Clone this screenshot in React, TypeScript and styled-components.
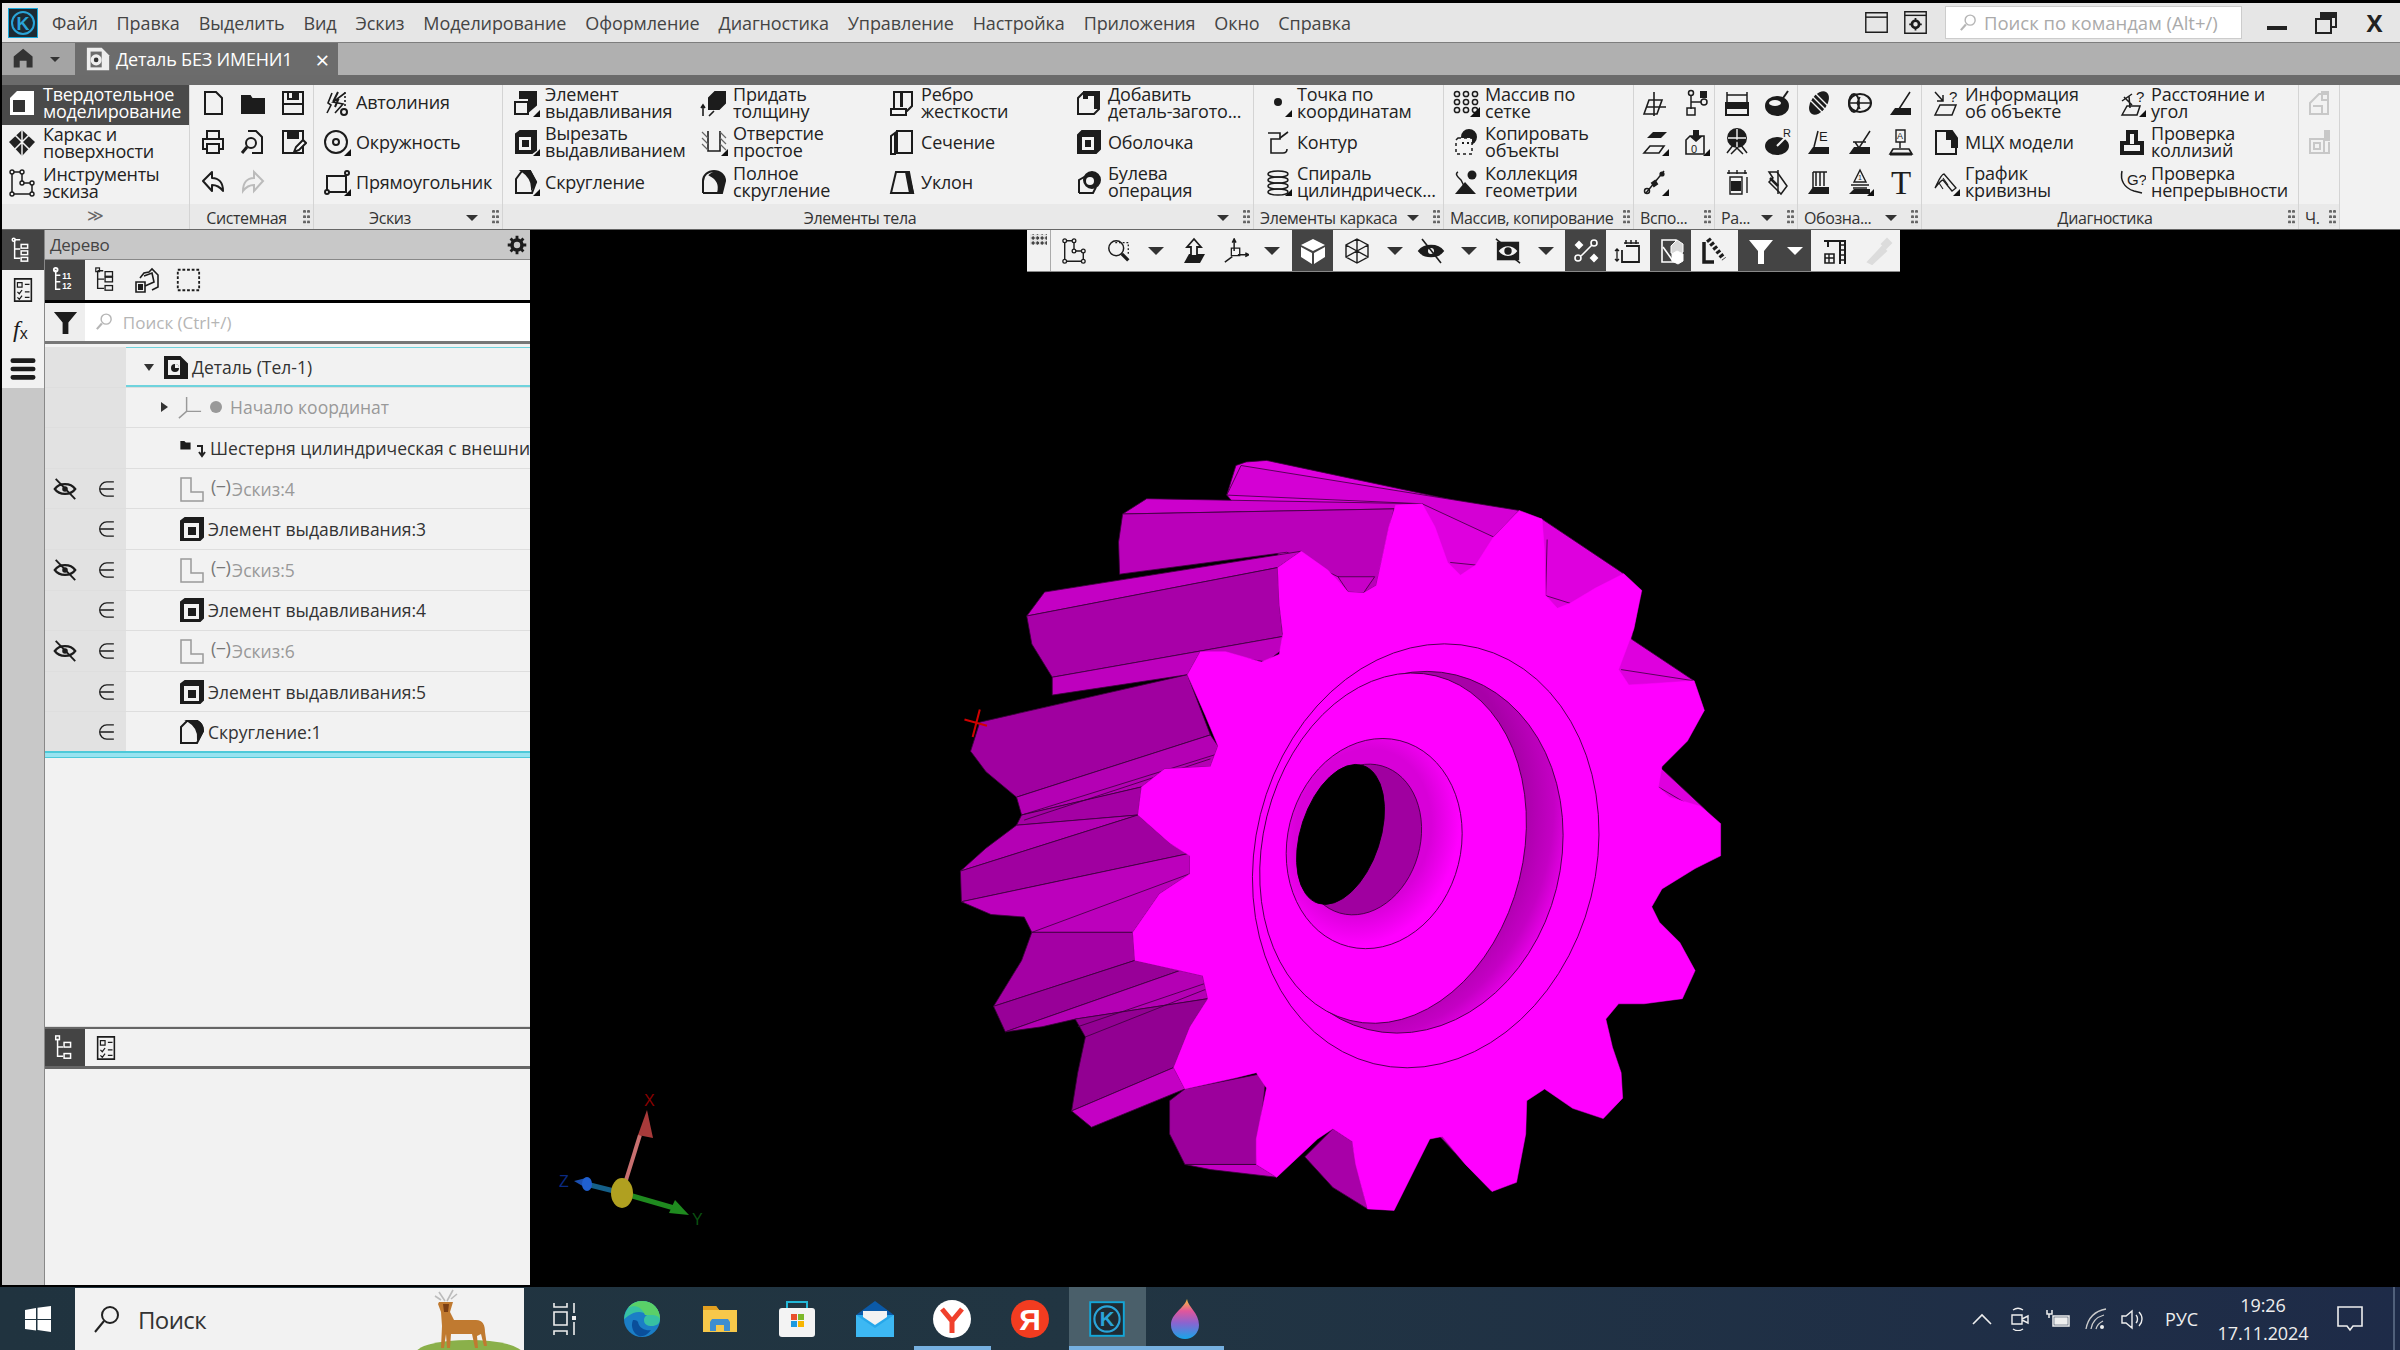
import React, { ReactNode } from "react";
import styled, { createGlobalStyle } from "styled-components";

const GlobalStyle = createGlobalStyle`
  html, body { margin: 0; padding: 0; background: #000; }
  * { box-sizing: border-box; }
  #root { width: 2400px; height: 1350px; overflow: hidden; }
`;

const FONT = `"Open Sans", "Noto Sans", sans-serif`;

const C = "#1c1c1c";
const more = <path d="M28 21v7h-7z" fill="#111" stroke="none" />;

const icons: Record<string, ReactNode> = {
  // системная
  newdoc: <path d="M6 3h11l6 6v16H6z" />,
  open: <path d="M3 7h8l2 3h12v14H3z" fill={C} />,
  save: <><path d="M4 3h20v22H4z" /><path d="M9 3h10v7H9zM4 15h20" /><path d="M14 4h3v5h-3z" fill={C} /></>,
  print: <><path d="M8 11V3h12v8M8 21H4V11h20v10h-4" /><path d="M8 16h12v9H8z" /></>,
  preview: <><path d="M9 3h8l6 6v16H13" /><circle cx="12" cy="15" r="5" /><path d="M8 19l-5 6" strokeWidth="3" /></>,
  saveas: <><path d="M4 3h20v22H4z" /><path d="M9 3h10v7H9z" fill={C} /><path d="M15 24l2-5 7-7 3 3-7 7z" fill="#fff" /></>,
  undo: <path d="M13 4L4 13l9 10v-6c5 0 8 2 11 6 0-8-4-13-11-13z" strokeLinejoin="round" />,
  redo: <path d="M15 4l9 9-9 10v-6c-5 0-8 2-11 6 0-8 4-13 11-13z" stroke="#bbb" />,
  // эскиз
  autoline: <><path d="M4 24l4-8-3-2 4-10M22 4l-12 9 10 2-8 9" strokeWidth="1.6" /><circle cx="21" cy="23" r="3" /><path d="M15 3l-4 8h4l-3 7" strokeWidth="2" /><path d="M22 3v16" strokeWidth="1.6" strokeDasharray="2 2" /></>,
  circle: <><circle cx="13" cy="14" r="11" /><circle cx="13" cy="14" r="3" />{more}</>,
  rect: <><path d="M4 8h19v16H4z" /><circle cx="24" cy="5" r="2" fill="#fff" /><circle cx="4" cy="24" r="2" fill="#fff" />{more}</>,
  // элементы тела
  extrude: <><path d="M3 13h13v12H3z" /><path d="M8 3h16v13l-7 6V9H8z" fill={C} />{more}</>,
  cut: <><path d="M4 6l4-3h16v19l-4 3H4z" fill={C} /><path d="M7 9h12v13H7z" fill="#f4f4f4" stroke="none" /><path d="M10 12h7v7h-7z" fill={C} stroke="none" />{more}</>,
  fillet: <><path d="M4 25V11l6-8h8l6 11-4 11z" /><path d="M10 3h8l6 11-4 6c0-8-4-13-10-17z" fill={C} />{more}</>,
  thick: <><path d="M9 9l6-6h10v11l-6 6H9z" fill={C} /><path d="M3 27v-10M1 19l2-3 2 3M9 27l5-5" strokeWidth="1.6" /></>,
  hole: <><path d="M8 3v20h12V3" strokeWidth="1.6" /><path d="M2 4l6 6M2 10l6 6M2 16l6 6M20 4l6 6M20 10l6 6M20 16l6 6" strokeWidth="1.2" stroke="#666" />{more}</>,
  fullfillet: <><path d="M3 25V13C3 7 8 3 14 3c6 0 11 4 11 10" /><path d="M10 7c4-4 12-4 15 6l-3 12h-4c2-7 0-14-8-18z" fill={C} /><path d="M3 25h15" /></>,
  rib: <><path d="M6 3h18v14l-5 5H6z" /><path d="M12 4h3v14h-3z" fill={C} stroke="none" /><path d="M3 20h15v6H3z" fill="#f4f4f4" /></>,
  section: <><path d="M3 8l4-3v21H3zM9 3h15v22H9z" /></>,
  draft: <><path d="M3 25L8 4h12l5 21z" /><path d="M18 4h3l4 21h-3z" fill={C} /></>,
  addpart: <><path d="M3 9l5-5h16v16l-5 5H3z" /><path d="M9 3h15v16h-4V9H9z" fill={C} /><path d="M13 7h6v6h-6z" fill="#f4f4f4" stroke="none" /></>,
  shell: <><path d="M3 7l4-4h18v18l-4 4H3z" fill={C} /><path d="M7 9h12v13H7z" fill="#f4f4f4" stroke="none" /><path d="M10 12h6v7h-6z" fill={C} stroke="none" /></>,
  bool: <><path d="M4 25V12l7-4M4 25h14l3-6" /><circle cx="17" cy="12" r="8" fill={C} /><circle cx="15" cy="13" r="4" fill="#f4f4f4" stroke="none" /></>,
  // каркас
  point: <><circle cx="14" cy="13" r="4" fill={C} stroke="none" />{more}</>,
  contour: <><path d="M4 5h12v6H7v14h12" strokeWidth="1.6" /><path d="M16 10l8-6M19 25c2 0 4-1 4-4" strokeWidth="1.6" /></>,
  spiral: <><ellipse cx="14" cy="6" rx="10" ry="3" strokeWidth="1.5" /><ellipse cx="14" cy="12" rx="10" ry="3" strokeWidth="1.5" /><ellipse cx="14" cy="18" rx="10" ry="3" strokeWidth="1.5" /><ellipse cx="14" cy="24" rx="10" ry="3" strokeWidth="1.5" />{more}</>,
  // массив
  grid: <><g strokeWidth="1.5">{[5, 13, 21].map((y) => [5, 14, 23].map((x) => (<circle key={`${x}-${y}`} cx={x} cy={y} r="2.6" />)))}</g><path d="M28 18v10h-10z" fill="#111" stroke="none" /></>,
  copy: <><circle cx="17" cy="9" r="7" fill={C} /><path d="M6 10h14v16H4V12z" strokeDasharray="3 3" strokeWidth="1.5" fill="#f4f4f4" /><path d="M10 15h2M15 15h2" /></>,
  collection: <><path d="M6 4c-4 2 1 6 3 8l3 6" strokeWidth="1.5" /><circle cx="20" cy="7" r="4.5" fill={C} stroke="none" /><path d="M3 26l10-12 11 12z" fill={C} stroke="none" /></>,
  // вспомогательные
  a1: <><path d="M3 25l5-14h13l-5 14z" strokeWidth="1.6" /><path d="M13 3v24M5 18h20" strokeWidth="1.6" /></>,
  a2: <><circle cx="9" cy="4" r="2.5" strokeWidth="1.5" /><path d="M9 7v13M9 13h10" strokeWidth="1.5" /><circle cx="22" cy="13" r="3" strokeWidth="1.5" /><path d="M18 2h7v7h-7z" fill={C} stroke="none" /><path d="M5 19h8v7H5z" strokeWidth="1.5" /></>,
  a3: <><path d="M6 10l6-6h14l-6 6z" fill={C} stroke="none" /><path d="M3 25l6-7h14l-5 7z" strokeWidth="1.6" />{more}</>,
  a4: <><path d="M8 8h14v18H4V12z" strokeWidth="1.6" /><path d="M11 2h6v6h4l-7 6-7-6h4z" fill={C} stroke="none" /><text x="9" y="25" fontSize="11" fill={C} stroke="none" fontFamily="Liberation Sans">0</text>{more}</>,
  a5: <><path d="M5 25L23 3" strokeWidth="1.5" /><circle cx="6" cy="23" r="2.5" strokeWidth="1.5" /><path d="M11 15l3-2 2 3-3 2z" fill={C} /><circle cx="21" cy="6" r="1.6" fill={C} />{more}</>,
  // размеры
  r1: <><path d="M4 3v10M24 3v10M4 6h20" strokeWidth="1.5" /><path d="M3 14h22v12H3z" /><path d="M3 14h22v5H3z" fill={C} /></>,
  r2: <><ellipse cx="13" cy="17" rx="11" ry="9" fill={C} /><ellipse cx="11" cy="14" rx="6" ry="3" fill="#f4f4f4" stroke="none" /><path d="M17 12l7-10" strokeWidth="2" /></>,
  r3: <><circle cx="14" cy="10" r="9" fill={C} /><path d="M14 1v18M5 10h18" stroke="#f4f4f4" strokeWidth="1.4" /><path d="M14 12L4 25M14 12l10 13M8 26l6-6 6 6" strokeWidth="1.5" /></>,
  r4: <><ellipse cx="13" cy="18" rx="11" ry="8" fill={C} /><path d="M13 18l8-8" stroke="#f4f4f4" /><text x="19" y="9" fontSize="11" fill={C} stroke="none" fontFamily="Liberation Sans">R</text></>,
  r5: <><path d="M6 2v4M14 2v4M22 2v4M4 5h20M7 9h12v17H7z" strokeWidth="1.4" /><path d="M9 14h8v8H9z" fill={C} /><path d="M24 9v16" strokeWidth="1.4" /></>,
  r6: <><path d="M5 4l8 0 10 14-6 8-12-12 4-4z" strokeWidth="1.5" /><path d="M14 2v24" strokeWidth="1.5" /><path d="M6 10l8 8" strokeWidth="2.5" /></>,
  // обозначения
  o1: <><ellipse cx="14" cy="14" rx="7" ry="12" transform="rotate(35 14 14)" fill={C} /><path d="M8 8l12 12M6 12l12 12M11 5l12 12" stroke="#f4f4f4" strokeWidth="1.4" /></>,
  o2: <><ellipse cx="14" cy="14" rx="11" ry="9" /><ellipse cx="8" cy="14" rx="5" ry="9" /><path d="M2 14h24M14 8l-3 6 3 6" strokeWidth="1.4" /></>,
  o3: <><path d="M12 20L23 3M8 20h16" strokeWidth="1.5" /><path d="M3 26l5-7h16v7z" fill={C} stroke="none" /></>,
  o4: <><path d="M9 19L13 3" strokeWidth="1.5" /><text x="14" y="13" fontSize="13" fill={C} stroke="none" fontFamily="Liberation Sans">E</text><path d="M3 26l5-7h16v7z" fill={C} stroke="none" /></>,
  o5: <><path d="M9 14l4 6 11-17M7 14h13" strokeWidth="1.5" /><path d="M3 26l5-7h16v7z" fill={C} stroke="none" /></>,
  o6: <><path d="M13 14v6" strokeWidth="1.5" /><path d="M9 2h9v12H9z" strokeWidth="1.4" /><text x="10" y="11" fontSize="9" fill={C} stroke="none" fontFamily="Liberation Sans">A</text><path d="M3 26l3-5h16l3 5z" strokeWidth="1.6" /><path d="M3 26h22" strokeWidth="3" /></>,
  o7: <><path d="M8 4h14M11 4v14M15 4v14M19 4v14M8 4v16" strokeWidth="1.5" /><path d="M3 26l5-7h16v7z" fill={C} stroke="none" /></>,
  o8: <><path d="M14 2l6 12H8z" strokeWidth="1.4" /><text x="12" y="12" fontSize="7" fill={C} stroke="none" fontFamily="Liberation Sans">1</text><path d="M5 17h18M7 20h14" strokeWidth="1.5" /><path d="M3 26l5-5h16v5z" fill={C} stroke="none" />{more}</>,
  t: <text x="14" y="26" fontSize="33" textAnchor="middle" fill={C} stroke="none" fontFamily="Liberation Serif">T</text>,
  // диагностика
  info: <><path d="M3 3l8 9M11 6v6H5" strokeWidth="1.5" /><path d="M3 26l5-10h16l-4 10z" strokeWidth="1.5" /><text x="17" y="13" fontSize="15" fill={C} stroke="none" fontFamily="Liberation Sans">?</text></>,
  mch: <><path d="M4 3h12v8h8v15H4z" /><path d="M15 3h5l5 7v9h-5v-8h-5z" fill={C} /></>,
  curv: <><path d="M3 20c3-6 6-14 9-14l12 14-4 3-9-11c-2 0-5 4-8 8z" strokeWidth="1.3" /><path d="M7 15l4 6M11 10l5 7" strokeWidth="1.1" />{more}</>,
  dist: <><path d="M4 26l5-9h13l-3 9z" strokeWidth="1.5" /><path d="M4 12l10-7M6 8l8 8M11 7l1 12" strokeWidth="1.5" /><text x="18" y="13" fontSize="15" fill={C} stroke="none" fontFamily="Liberation Sans">?</text>{more}</>,
  collide: <><path d="M9 3h10v11h6v12H3V14h6z" fill={C} /><path d="M12 6h4v10h-4zM6 17h16v6H6z" fill="#f4f4f4" stroke="none" /></>,
  cont: <><path d="M4 3c-2 9 2 17 12 20l8 2" strokeWidth="1.5" /><text x="9" y="17" fontSize="15" fill={C} stroke="none" fontFamily="Liberation Sans">G?</text></>,
  c1: <g stroke="#c8c8c8"><path d="M5 14l9-9h9v20H5zM8 17h9v8M17 3h6v8h-6z" /></g>,
  c2: <g stroke="#c8c8c8"><path d="M5 11h14v14H5zM9 15h6v6H9z" /><path d="M20 3h4v9h-4z" fill="#c8c8c8" /><path d="M24 14v11h-5" /></g>,
  // панель вида
  lsketch: <><path d="M4 3h10v11h10v11H4z" strokeWidth="1.5" /><g fill="#f2f2f2" strokeWidth="1.4"><circle cx="4" cy="3" r="2" /><circle cx="14" cy="3" r="2" /><circle cx="14" cy="14" r="2" /><circle cx="24" cy="14" r="2" /><circle cx="24" cy="25" r="2" /><circle cx="4" cy="25" r="2" /></g></>,
  zoom: <><circle cx="11" cy="11" r="8" strokeWidth="1.6" /><path d="M17 17l7 7" strokeWidth="3.5" /><path d="M10 5h14v12" strokeWidth="1.4" strokeDasharray="2 2" /></>,
  normal: <><path d="M5 26l5-9h16l-5 9z" fill={C} stroke="none" /><path d="M15 2l7 8h-4v9h-6v-9H8z" fill="#f2f2f2" strokeWidth="1.8" /></>,
  axes: <><path d="M12 14v-12M10 5l2-4 2 4M16 18h11M24 16l4 2-4 2M10 20l-8 6" strokeWidth="1.6" /><path d="M9 11h9v8H9z" strokeWidth="1.4" /></>,
  cube: <><path d="M14 2l12 6-12 6L2 8z" fill="#fff" stroke="none" /><path d="M2 10l11 6v11L2 20zM26 10l-11 6v11l11-7z" fill="#fff" stroke="none" /></>,
  wire: <path d="M14 2l11 6v12l-11 6L3 20V8zM3 8l11 6 11-6M14 14v12M3 20l11-6 11 6M14 2v12" strokeWidth="1.4" />,
  eyeoff: <><path d="M2 14c5-7 19-7 24 0-5 7-19 7-24 0z" fill={C} /><circle cx="14" cy="14" r="3" fill="#f2f2f2" stroke="none" /><path d="M5 2l19 24" strokeWidth="1.6" /></>,
  eyebox: <><path d="M2 4h24v20H2z" fill={C} stroke="none" /><path d="M4 14c5-7 15-7 20 0-5 7-15 7-20 0z" fill="#f2f2f2" stroke="none" /><circle cx="14" cy="14" r="4" fill={C} stroke="none" /><path d="M1 1l5 4M22 23l5 4" strokeWidth="1.6" /></>,
  nodes: <g stroke="#fff"><path d="M9 19L20 8" strokeWidth="1.6" /><circle cx="22" cy="6" r="3" strokeWidth="1.6" /><circle cx="6" cy="21" r="3" strokeWidth="1.6" /><path d="M7 5l3 3-3 3-3-3zM22 18l3 3-3 3-3-3z" fill="#fff" /></g>,
  frame: <><path d="M12 3v4M17 3v4M22 3v4M10 6h15" strokeWidth="1.5" /><path d="M12 9h13v16H8V13" strokeWidth="1.8" /><path d="M3 12v12M1 14l2-2 2 2M1 22l2 2 2-2" strokeWidth="1.3" /></>,
  solids: <g stroke="#fff"><path d="M5 3h14v22H5z" strokeWidth="1.6" /><path d="M14 9l6-6 6 4v8l-6 4-6-3z" fill="#d8d8d8" strokeWidth="1" /><path d="M15 17l5-3 6 3v7l-5 3-6-3z" fill="#fff" strokeWidth="1" /><path d="M6 10l10 14" strokeWidth="1.6" /></g>,
  chain: <><path d="M5 5v20h10" strokeWidth="3.5" /><path d="M9 2l16 20" strokeWidth="5" strokeDasharray="3 2" /></>,
  funnel: <path d="M2 3h24L17 14v13h-6V14z" fill="#fff" stroke="none" />,
  crane: <><path d="M3 4h22M19 4v23M24 4v23M7 4v6" strokeWidth="2" /><path d="M19 8h5M19 13h5M19 18h5M19 23h5" strokeWidth="1.4" /><path d="M4 17h9v9H4z" strokeWidth="1.6" /><path d="M4 21h9M8 17v9" strokeWidth="1.4" /></>,
  pipette: <path d="M3 25l14-15 4 4L7 27zM17 7l5-5 4 4-5 5z" fill="#dcdcdc" stroke="#dcdcdc" />,
  // дерево
  partico: <><path d="M3 4h15l7 7v14H3z" fill={C} /><path d="M6 7h12v15H6z" fill="#f2f2f2" stroke="none" /><circle cx="13" cy="15" r="4" fill={C} stroke="none" /><path d="M13 15h4a4 4 0 0 0-4-4z" fill="#f2f2f2" stroke="none" /></>,
  origin: <path d="M11 3v15L3 25M11 18h15" stroke="#999" strokeWidth="1.5" />,
  folder: <path d="M3 5h5l2 2h6v9H3z" fill={C} stroke="none" />,
  sketch: <path d="M3 3h10v14h12v9H3z" stroke="#999" strokeWidth="1.5" />,
  extr: <><path d="M3 6l4-3h18v19l-3 3H3z" fill={C} /><path d="M6 8h15v15H6z" fill="#f2f2f2" stroke="none" /><path d="M10 12h8v8h-8z" fill={C} stroke="none" /></>,
  round: <><path d="M3 9l6-6h10c4 2 6 6 6 10l-6 12H3z" fill="#f2f2f2" /><path d="M10 3h9c4 2 6 6 6 10l-5 9c1-8-3-15-10-19z" fill={C} /></>,
  eyeStruck: <><path d="M3 14c5-7 17-7 22 0-5 7-17 7-22 0z" strokeWidth="2.4" /><circle cx="14" cy="14" r="3" fill={C} stroke="none" /><path d="M4 3l21 22" strokeWidth="2" /></>,
  member: <path d="M24 5h-9a9 9 0 0 0 0 18h9M7 14h17" strokeWidth="1.7" />,
  treeRail: <><path d="M5 3v20h6M5 13h6M5 3h6" strokeWidth="1.6" /><g fill="none" strokeWidth="1.6"><circle cx="4" cy="3" r="1.6" /><rect x="12" y="8" width="7" height="4" /><rect x="12" y="15" width="7" height="4" /><rect x="12" y="22" width="7" height="4" /></g></>,
  treeNum: <><path d="M4 3v21h5M4 9h5M4 16h5" strokeWidth="1.6" /><circle cx="4" cy="3" r="2" /><text x="11" y="13" fontSize="9" fontWeight="700" fill="#fff" stroke="none" fontFamily="Liberation Sans">11</text><text x="11" y="24" fontSize="9" fontWeight="700" fill="#fff" stroke="none" fontFamily="Liberation Sans">12</text></>,
  treeGroup: <><path d="M5 4v19h7M5 13h7M5 4h6" strokeWidth="1.5" /><rect x="3" y="1" width="4" height="4" strokeWidth="1.3" /><rect x="13" y="5" width="8" height="5" strokeWidth="1.4" /><rect x="13" y="11" width="8" height="5" strokeWidth="1.4" /><rect x="13" y="20" width="8" height="5" strokeWidth="1.4" /></>,
  treeFaces: <><path d="M7 12l4-5 5-1 3-3 6 6v12l-6 3" strokeWidth="1.6" /><path d="M3 16h9v10H3z" strokeWidth="1.6" /><path d="M6 19h3v4H6z" fill={C} /><path d="M11 10l8-3 2 9-9 4" strokeWidth="1.6" /></>,
  treeSel: <rect x="3" y="3" width="23" height="22" strokeDasharray="3 2" strokeWidth="2" />,
  checks: <><path d="M5 2h18v24H5z" strokeWidth="1.7" /><path d="M8 6h5v5H8zM16 8h5M8 16l2 2 3-4M16 16h5M8 22l2 2 3-4M16 22h5" strokeWidth="1.3" /></>,
  filter: <path d="M2 3h24L17 14v12h-6V14z" fill={C} stroke="none" />,
  lens: <><circle cx="17" cy="10" r="7" stroke="#b5b5b5" strokeWidth="2" /><path d="M11 16l-7 8" stroke="#b5b5b5" strokeWidth="3" /></>,
  gear: <><circle cx="14" cy="14" r="7" strokeWidth="5" /><path d="M14 1v5M14 22v5M1 14h5M22 14h5M5 5l3 3M20 20l3 3M23 5l-3 3M8 20l-3 3" strokeWidth="4" /></>,
  fx: <text x="4" y="21" fontSize="24" fontStyle="italic" fill={C} stroke="none" fontFamily="Liberation Serif">f<tspan fontSize="16" dy="2" fontFamily="Liberation Sans" fontStyle="normal">x</tspan></text>,
  lines: <path d="M3 5h22M3 14h22M3 23h22" strokeWidth="5" strokeLinecap="round" />,
  home: <path d="M2 24V11L13 2l11 9v13h-7v-8H9v8z" fill="#333" stroke="none" />,
  tabpart: <><path d="M2 2h16l8 8v16H2z" fill="#eee" stroke="none" /><path d="M6 6h12v17H6z" fill="#6c6c6c" stroke="none" /><circle cx="12" cy="15" r="6" fill="#eee" stroke="none" /><circle cx="12" cy="15" r="2.5" fill="#333" stroke="none" /></>,
  wnd: <><path d="M2 3h24v22H2z" strokeWidth="1.6" /><path d="M2 8h24" strokeWidth="1.6" /></>,
  wndgear: <><path d="M2 2h24v24H2z" strokeWidth="1.6" /><path d="M2 6h24" strokeWidth="1.6" /><circle cx="14" cy="16" r="4" strokeWidth="3" /><path d="M14 9v3M14 20v3M7 16h3M18 16h3" strokeWidth="2" /></>,
};

const Svg = styled.svg<{ $size: number }>`
  width: ${(p) => p.$size}px;
  height: ${(p) => p.$size}px;
  flex: none;
`;

function Ico({ name, size = 28, light }: { name: string; size?: number; light?: boolean }) {
  return (
    <Svg $size={size} viewBox="0 0 28 28" fill="none" stroke={light ? "#fff" : C} strokeWidth={2}>
      {icons[name]}
    </Svg>
  );
}

const Page = styled.div`
  width: 2400px;
  height: 1350px;
  padding-top: 3px;
  background: #000;
  display: flex;
  flex-direction: column;
  font-family: ${FONT};
  overflow: hidden;
`;

/* ---------- шапка ---------- */
const MenuBar = styled.div`
  height: 40px;
  margin-left: 2px;
  background: #e6e6e6;
  border-bottom: 1px solid #7d7d7d;
  display: flex;
  align-items: center;
  padding-left: 6px;
`;
const Logo = styled.svg`
  width: 30px;
  height: 30px;
  margin-right: 14px;
`;
const MenuList = styled.div`
  display: flex;
  gap: 18.9px;
  font-size: 18px;
  color: #444;
  letter-spacing: -0.1px;
`;
const MenuRight = styled.div`
  margin-left: auto;
  display: flex;
  align-items: center;
  gap: 14px;
`;
const CommandSearch = styled.div`
  width: 297px;
  height: 33px;
  margin-left: 3px;
  background: #fff;
  border: 1px solid #ccc;
  display: flex;
  align-items: center;
  gap: 6px;
  padding-left: 12px;
  font-size: 18.5px;
  white-space: nowrap;
  color: #aaa;
`;
const WinButtons = styled.div`
  display: flex;
  align-items: center;
  margin-left: -4px;
  margin-right: 1px;
`;
const WinButton = styled.div`
  width: 49px;
  height: 36px;
  display: flex;
  align-items: center;
  justify-content: center;
  color: #222;
  font-size: 24px;
  font-weight: 700;
`;
const Minimize = styled.span`
  width: 20px;
  height: 4px;
  margin-top: 10px;
  background: #222;
`;

const TabBar = styled.div`
  height: 32px;
  margin-left: 2px;
  background: #b0b0b0;
  display: flex;
`;
const HomeCell = styled.div`
  width: 73px;
  background: #a4a4a4;
  display: flex;
  align-items: center;
  padding-left: 10px;
  gap: 14px;
`;
const TabCaret = styled.span`
  width: 0;
  height: 0;
  border-left: 5px solid transparent;
  border-right: 5px solid transparent;
  border-top: 5px solid #333;
`;
const DocTab = styled.div`
  width: 263px;
  background: #6c6c6c;
  color: #fff;
  display: flex;
  align-items: center;
  font-size: 18px;
  letter-spacing: -0.2px;
  padding-left: 10px;
  gap: 5px;
`;
const TabClose = styled.span`
  margin-left: auto;
  margin-right: 9px;
  font-size: 24px;
`;
const Band = styled.div`
  height: 10px;
  margin-left: 2px;
  background: #6b6b6b;
`;

/* ---------- лента ---------- */
const Ribbon = styled.div`
  height: 145px;
  margin-left: 2px;
  background: #f2f2f2;
  border-bottom: 1px solid #666;
  display: flex;
`;
const ModeColumn = styled.div`
  width: 188px;
  display: flex;
  flex-direction: column;
  border-right: 1px solid #d4d4d4;
`;
const ModeItem = styled.div<{ $active?: boolean }>`
  height: 40px;
  padding: 0 0 3px 6px;
  display: flex;
  align-items: center;
  gap: 7px;
  font-size: 18px;
  line-height: 17px;
  letter-spacing: -0.25px;
  background: ${(p) => (p.$active ? "#4a4a4a" : "transparent")};
  color: ${(p) => (p.$active ? "#fff" : "#222")};
`;
const ModeFooter = styled.div`
  margin-top: auto;
  height: 25px;
  background: #e9e9e9;
  color: #666;
  font-size: 16px;
  text-align: center;
  line-height: 22px;
`;
const Group = styled.div<{ $w: number }>`
  width: ${(p) => p.$w}px;
  flex: none;
  display: flex;
  flex-direction: column;
  border-right: 1px solid #d4d4d4;
`;
const GroupBody = styled.div<{ $cols: string; $pad?: number }>`
  height: 119px;
  margin: -2px 0 2px;
  display: grid;
  grid-template-columns: ${(p) => p.$cols};
  grid-template-rows: repeat(3, 1fr);
  grid-auto-flow: column;
  padding-left: ${(p) => p.$pad ?? 0}px;
  overflow: hidden;
`;
const GroupFooter = styled.div`
  height: 25px;
  background: #e9e9e9;
  display: flex;
  align-items: center;
  padding: 2px 3px 0 6px;
  gap: 6px;
  font-size: 16px;
  letter-spacing: -0.4px;
  color: #333;
`;
const FooterLabel = styled.span<{ $left?: boolean }>`
  flex: 1;
  white-space: nowrap;
  overflow: hidden;
  text-align: ${(p) => (p.$left ? "left" : "center")};
`;
const Tri = styled.span<{ $light?: boolean; $big?: boolean }>`
  flex: none;
  width: 0;
  height: 0;
  border-left: ${(p) => (p.$big ? 8 : 6)}px solid transparent;
  border-right: ${(p) => (p.$big ? 8 : 6)}px solid transparent;
  border-top: ${(p) => (p.$big ? 8 : 6)}px solid ${(p) => (p.$light ? "#fff" : "#333")};
`;
const FooterTri = styled(Tri)`
  margin-right: 8px;
`;
const Grip = styled.span`
  flex: none;
  width: 7px;
  height: 16px;
  background-image: radial-gradient(circle at 1.5px 1.5px, #666 1.4px, transparent 1.6px);
  background-size: 4px 5.3px;
`;
const ToolCell = styled.div`
  display: flex;
  align-items: center;
  gap: 5px;
  font-size: 18px;
  line-height: 17px;
  letter-spacing: -0.2px;
  color: #222;
  white-space: pre-line;
`;
const IconCell = styled.div`
  display: flex;
  align-items: center;
  justify-content: center;
`;

function Tool({ icon, label }: { icon: string; label: string }) {
  return (
    <ToolCell>
      <Ico name={icon} />
      <span>{label}</span>
    </ToolCell>
  );
}

function IconGrid({ names, cols, pad }: { names: string[]; cols: string; pad?: number }) {
  return (
    <GroupBody $cols={cols} $pad={pad}>
      {names.map((n, i) => (
        <IconCell key={i}>{n ? <Ico name={n} /> : null}</IconCell>
      ))}
    </GroupBody>
  );
}

function Footer({ label, arrow, left }: { label: string; arrow?: boolean; left?: boolean }) {
  return (
    <GroupFooter>
      <FooterLabel $left={left}>{label}</FooterLabel>
      {arrow && <FooterTri />}
      <Grip />
    </GroupFooter>
  );
}

/* ---------- дерево ---------- */
const Workspace = styled.div`
  flex: 1;
  min-height: 0;
  margin-left: 2px;
  display: flex;
  border-bottom: 2px solid #000;
`;
const Rail = styled.div`
  width: 43px;
  flex: none;
  background: #c8c8c8;
  border-right: 1px solid #888;
  display: flex;
  flex-direction: column;
`;
const RailItem = styled.div<{ $active?: boolean; $h?: number }>`
  height: ${(p) => p.$h ?? 40}px;
  display: flex;
  align-items: center;
  justify-content: center;
  background: ${(p) => (p.$active ? "#444" : "#f2f2f2")};
`;
const TreePanel = styled.div`
  width: 485px;
  flex: none;
  background: #f2f2f2;
  display: flex;
  flex-direction: column;
`;
const PanelHead = styled.div`
  height: 30px;
  background: #c8c8c8;
  border-bottom: 1px solid #888;
  display: flex;
  align-items: center;
  justify-content: space-between;
  padding: 0 3px 0 5px;
  font-size: 17px;
  letter-spacing: -0.3px;
  color: #444;
`;
const TreeTools = styled.div`
  height: 43px;
  border-bottom: 3px solid #000;
  display: flex;
`;
const TreeTool = styled.div<{ $active?: boolean }>`
  width: ${(p) => (p.$active ? 40 : 41)}px;
  display: flex;
  align-items: center;
  justify-content: center;
  background: ${(p) => (p.$active ? "#444" : "transparent")};
`;
const TreeSearch = styled.div`
  height: 41px;
  background: #fff;
  border-bottom: 3px solid #777;
  display: flex;
  align-items: center;
  font-size: 17px;
  color: #b5b5b5;
`;
const FilterCell = styled.div`
  width: 40px;
  height: 100%;
  background: #eee;
  display: flex;
  align-items: center;
  justify-content: center;
  margin-right: 9px;
`;
const Rows = styled.div`
  margin-top: 3px;
  display: flex;
  flex-direction: column;
`;
const Row = styled.div`
  height: 40.6px;
  display: flex;
  border-bottom: 1px solid #dedede;
`;
const Gutter = styled.div`
  width: 81px;
  flex: none;
  background: #e2e2e2;
  display: flex;
  align-items: center;
`;
const GutterSlot = styled.div`
  width: 41px;
  display: flex;
  align-items: center;
  justify-content: center;
`;
const RowMain = styled.div<{ $selected?: boolean; $indent: number }>`
  flex: 1;
  min-width: 0;
  display: flex;
  align-items: center;
  padding-left: ${(p) => p.$indent}px;
  gap: 2px;
  white-space: nowrap;
  overflow: hidden;
  border-top: ${(p) => (p.$selected ? "1px solid #6fd3dd" : "0")};
  box-shadow: ${(p) => (p.$selected ? "inset 0 -2px 0 #6fd3dd" : "none")};
`;
const RowText = styled.span<{ $muted?: boolean }>`
  font-size: 17.5px;
  color: ${(p) => (p.$muted ? "#999" : "#333")};
`;
const Expander = styled.span<{ $open?: boolean }>`
  flex: none;
  margin-right: 6px;
  width: 0;
  height: 0;
  border-style: solid;
  border-color: transparent;
  ${(p) =>
    p.$open
      ? "border-width: 7px 5px 0 5px; border-top-color: #333;"
      : "border-width: 5px 0 5px 7px; border-left-color: #333;"}
`;
const Dot = styled.span`
  flex: none;
  width: 12px;
  height: 12px;
  border-radius: 50%;
  background: #999;
  margin: 0 6px 0 5px;
`;
const Minus = styled.span`
  flex: none;
  color: #777;
  font-size: 18px;
  letter-spacing: -0.6px;
  margin: -5px 0 0 3px;
`;
const FolderArrow = styled.svg`
  flex: none;
  width: 10px;
  height: 14px;
  margin: 6px 2px 0 -6px;
`;
const Selection = styled.div`
  height: 7px;
  margin-top: -2px;
  background: #96e3f0;
  border-top: 2px solid #4cc9d8;
  border-bottom: 1px solid #4cc9d8;
`;
const TreeFill = styled.div`
  flex: 1;
  border-bottom: 1px solid #ddd;
`;
const SubTabs = styled.div`
  height: 42px;
  display: flex;
  border-top: 2px solid #666;
  border-bottom: 3px solid #666;
`;
const SubFill = styled.div`
  height: 216px;
`;

/* ---------- окно модели ---------- */
const Viewport = styled.div`
  flex: 1;
  position: relative;
  background: #000;
  padding-left: 497px;
`;
const ViewTools = styled.div`
  width: 873px;
  height: 42px;
  background: #f2f2f2;
  display: flex;
  border-bottom: 1px solid #888;
  align-items: stretch;
`;
const ViewGrip = styled.div`
  width: 25px;
  background-color: #e4e4e4;
  background-image: radial-gradient(circle at 2px 2px, #444 1.5px, transparent 1.7px);
  background-size: 4.5px 5px;
  background-repeat: repeat;
  background-position: 4px 6px;
  background-clip: content-box;
  padding: 4px 3px 26px 3px;
  border-right: 1px solid #aaa;
`;
const ViewBtn = styled.div<{ $w?: number; $active?: boolean; $gap?: number }>`
  width: ${(p) => p.$w ?? 44}px;
  flex: none;
  margin-left: ${(p) => p.$gap ?? 0}px;
  display: flex;
  align-items: center;
  justify-content: center;
  gap: 12px;
  background: ${(p) => (p.$active ? "#444" : "transparent")};
`;
const GearBox = styled.svg`
  position: absolute;
  left: 410px;
  top: 210px;
  width: 800px;
  height: 800px;
`;
const Triad = styled.svg`
  position: absolute;
  left: 20px;
  top: 860px;
  width: 180px;
  height: 160px;
`;

/* ---------- панель задач ---------- */
const Taskbar = styled.div`
  height: 63px;
  background: linear-gradient(90deg, #20333f 0%, #213542 45%, #1e2b48 100%);
  display: flex;
  align-items: stretch;
  color: #eee;
`;
const StartBtn = styled.div`
  width: 75px;
  display: flex;
  align-items: center;
  justify-content: center;
`;
const SearchBox = styled.div`
  width: 449px;
  margin-top: 1px;
  background: #f2f2f2;
  color: #333;
  font-size: 24px;
  letter-spacing: -0.6px;
  display: flex;
  align-items: center;
  gap: 18px;
  padding-left: 18px;
  position: relative;
  overflow: hidden;
`;
const Deer = styled.svg`
  position: absolute;
  right: 0;
  bottom: 0;
  width: 115px;
  height: 62px;
`;
const TaskIcons = styled.div`
  display: flex;
  padding-left: 2px;
`;
const TaskItem = styled.div<{ $active?: boolean; $open?: boolean }>`
  width: 77.5px;
  position: relative;
  display: flex;
  align-items: center;
  justify-content: center;
  background: ${(p) => (p.$active ? "#4a5f6a" : "transparent")};
  box-shadow: ${(p) => (p.$open ? "inset 0 -4px 0 #76b0e0" : "none")};
`;
const Tray = styled.div`
  margin-left: auto;
  display: flex;
  align-items: center;
  font-size: 18px;
  letter-spacing: -0.1px;
`;
const TraySlot = styled.div`
  width: 38px;
  display: flex;
  justify-content: center;
`;
const Lang = styled.span`
  margin-left: 12px;
  margin-right: 21px;
`;
const Clock = styled.div`
  width: 88px;
  white-space: nowrap;
  display: flex;
  flex-direction: column;
  align-items: center;
  line-height: 28px;
`;
const Notify = styled.div`
  width: 86px;
  display: flex;
  justify-content: center;
`;
const Edge = styled.div`
  width: 7px;
  height: 100%;
  border-left: 2px solid #50607a;
`;

const front = "893,128 945,125 970,170 995,240 1020,265 1050,245 1085,190 1135,138 1180,155 1185,220 1187,305 1210,330 1235,320 1285,290 1340,262 1375,295 1360,370 1330,450 1350,480 1385,478 1478,472 1498,530 1465,590 1415,640 1408,680 1430,700 1490,718 1530,752 1530,815 1480,840 1415,880 1395,915 1410,945 1450,985 1480,1040 1455,1095 1380,1105 1330,1105 1305,1135 1318,1190 1335,1240 1338,1290 1300,1330 1240,1310 1185,1272 1150,1295 1148,1360 1130,1455 1082,1473 1030,1420 985,1365 960,1370 930,1430 890,1510 838,1507 815,1420 808,1375 770,1350 740,1370 660,1445 620,1420 620,1370 640,1270 620,1240 580,1250 480,1272 458,1230 490,1150 525,1095 515,1050 470,1040 382,1020 378,965 430,890 490,850 490,815 450,790 388,735 395,680 440,645 530,640 545,600 520,540 485,460 510,415 560,415 630,435 665,420 672,380 665,320 662,250 708,218 760,255 800,298 830,300 855,285 880,170";

const backFaces: [string, string][] = [
  ["562,108 580,50 600,43 640,40 1180,155 1340,262 1376,295 1355,390 1478,472 1498,530 1412,642 1530,752 1300,900 900,500", "#de00de"],
  ["590,50 1135,138 1085,190 945,125 562,108", "#d400d4"],
  ["405,115 945,125 890,135 358,145", "#cc00cc"],
  ["358,145 890,135 855,285 830,300 780,268 680,220 352,263 350,200", "#ba00ba"],
  ["780,268 852,268 830,300 800,298", "#c800c8"],
  ["205,298 708,218 662,250 170,345", "#c400c4"],
  ["170,345 662,250 665,320 672,385 220,465 180,400", "#a800a8"],
  ["220,465 672,385 672,410 640,435 510,415 485,460 220,500", "#be00be"],
  ["78,553 485,460 530,578 150,700 90,650 60,610", "#a000a0"],
  ["150,700 530,578 545,600 530,640 440,645 395,680 160,735", "#b400b4"],
  ["160,735 395,680 388,735 150,755", "#a400a4"],
  ["90,800 150,755 388,735 40,845", "#b400b4"],
  ["40,845 388,735 450,790 490,810 42,905", "#a000a0"],
  ["42,905 490,810 490,850 430,890 378,965 180,965 165,935 100,930", "#bc00bc"],
  ["180,965 378,965 382,1020 105,1110 160,1020", "#a400a4"],
  ["105,1110 382,1020 470,1040 128,1160", "#980098"],
  ["128,1160 470,1040 515,1050 525,1095 265,1135 200,1150", "#b400b4"],
  ["265,1135 525,1095 490,1150 458,1230 258,1315 270,1240 285,1170", "#920092"],
  ["258,1315 458,1230 480,1272 297,1347", "#c400c4"],
  ["450,1295 480,1272 640,1240 620,1420 480,1420 450,1360", "#9c009c"],
  ["480,1420 620,1420 660,1445 530,1430", "#c400c4"],
  ["715,1405 770,1350 808,1375 838,1507 770,1465", "#a800a8"],
  ["975,1360 1000,1365 1082,1473 1030,1420", "#a800a8"],
];

const edgeLines = [
  "1000,240 1050,245",
  "1190,195 1187,305 1235,320",
  "1335,450 1478,472",
  "1408,680 1530,752",
  "180,965 490,850",
  "160,735 545,615",
  "165,745 530,625",
  "285,1170 525,1075",
  "270,1150 520,1065",
  "480,1420 620,1420",
];

function GearDrawing() {
  return (
    <GearBox viewBox="0 0 1568 1568">
      <defs>
        <radialGradient id="recess" cx="0.35" cy="0.45" r="0.68">
          <stop offset="0.72" stopColor="#a800a8" />
          <stop offset="0.88" stopColor="#c400c4" />
          <stop offset="1" stopColor="#f400f4" />
        </radialGradient>
        <radialGradient id="bossShade" cx="0.42" cy="0.45" r="0.55">
          <stop offset="0.7" stopColor="#d800d8" />
          <stop offset="1" stopColor="#ff00ff" />
        </radialGradient>
      </defs>
      {backFaces.map(([pts, fill]) => (
        <polygon key={pts} points={pts} fill={fill} stroke="#3c003c" strokeWidth={1.6} strokeLinejoin="round" />
      ))}
      {edgeLines.map((pts) => (
        <polyline key={pts} points={pts} fill="none" stroke="#3c003c" strokeWidth={1.6} />
      ))}
      <polygon points={front} fill="#ff00ff" stroke="#ff00ff" strokeWidth={1} />
      <g stroke="#3c003c" strokeWidth={1.6}>
        <ellipse cx={952} cy={815} rx={334} ry={420} transform="rotate(14 952 815)" fill="#ff00ff" />
        <ellipse cx={925} cy={808} rx={292} ry={358} transform="rotate(14 925 808)" fill="url(#recess)" />
        <ellipse cx={888} cy={800} rx={255} ry={348} transform="rotate(14 888 800)" fill="#ff00ff" />
        <ellipse cx={851} cy={791} rx={170} ry={208} transform="rotate(14 851 791)" fill="url(#bossShade)" />
        <ellipse cx={825} cy={783} rx={116} ry={150} transform="rotate(16 825 783)" fill="#a000a0" />
        <ellipse cx={785} cy={773} rx={78} ry={142} transform="rotate(18 785 773)" fill="#000" stroke="#000" />
      </g>
      <path d="M48 548l44 12M78 528l-14 54" stroke="#d00000" strokeWidth={4} />
    </GearBox>
  );
}

function AxisTriad() {
  return (
    <Triad viewBox="0 0 180 160">
      <path d="M72 103L90 45" stroke="#c87070" strokeWidth={4} />
      <path d="M97 20l6 28-15-3z" fill="#a83a3a" />
      <path d="M72 103L40 95" stroke="#15608a" strokeWidth={5} />
      <path d="M24 91l12-3v10z" fill="#1a4fb0" />
      <ellipse cx={37} cy={94} rx={5} ry={7} fill="#2060d0" />
      <path d="M72 103l52 15" stroke="#1f8a1f" strokeWidth={5} />
      <path d="M139 125l-20-2 6-13z" fill="#1f8a1f" />
      <ellipse cx={72} cy={103} rx={11} ry={15} fill="#b0a020" />
      <g fontFamily="Liberation Sans" fontSize="16">
        <text x="94" y="16" fill="#8a0000">X</text>
        <text x="9" y="97" fill="#0a2a80">Z</text>
        <text x="142" y="135" fill="#0a5010">Y</text>
      </g>
    </Triad>
  );
}

function KompasMark({ size }: { size: number }) {
  return (
    <svg width={size} height={size} viewBox="0 0 30 30">
      <rect x="1" y="1" width="28" height="28" fill="#1f2b33" stroke="#13a6d8" strokeWidth="1.6" />
      <circle cx="15" cy="15" r="10.5" fill="none" stroke="#2aa4d8" strokeWidth="1.8" />
      <text x="15" y="21" fontSize="17" fontWeight="700" textAnchor="middle" fill="#2aa4d8" fontFamily="Liberation Sans">K</text>
    </svg>
  );
}

const treeRows: { eye?: boolean; icon: string; text: string; kind?: string }[] = [
  { eye: true, icon: "sketch", text: "Эскиз:4", kind: "sketch" },
  { icon: "extr", text: "Элемент выдавливания:3" },
  { eye: true, icon: "sketch", text: "Эскиз:5", kind: "sketch" },
  { icon: "extr", text: "Элемент выдавливания:4" },
  { eye: true, icon: "sketch", text: "Эскиз:6", kind: "sketch" },
  { icon: "extr", text: "Элемент выдавливания:5" },
  { icon: "round", text: "Скругление:1" },
];

export default function App() {
  return (
    <Page>
      <GlobalStyle />
      <MenuBar>
        <Logo viewBox="0 0 30 30">
          <rect x="0.5" y="0.5" width="29" height="29" fill="#1d2a33" stroke="#16a8dc" />
          <circle cx="15" cy="15" r="11" fill="none" stroke="#2aa4d8" strokeWidth="2" />
          <text x="15" y="21.5" fontSize="18" fontWeight="700" textAnchor="middle" fill="#2aa4d8" fontFamily="Liberation Sans">K</text>
        </Logo>
        <MenuList>
          {["Файл", "Правка", "Выделить", "Вид", "Эскиз", "Моделирование", "Оформление", "Диагностика", "Управление", "Настройка", "Приложения", "Окно", "Справка"].map((m) => (
            <span key={m}>{m}</span>
          ))}
        </MenuList>
        <MenuRight>
          <Ico name="wnd" size={25} />
          <Ico name="wndgear" size={25} />
          <CommandSearch>
            <Ico name="lens" size={20} />
            Поиск по командам (Alt+/)
          </CommandSearch>
          <WinButtons>
            <WinButton><Minimize /></WinButton>
            <WinButton>
              <svg width="22" height="22" viewBox="0 0 22 22" fill="none" stroke="#222" strokeWidth="2">
                <path d="M1 7h15v14H1z" /><path d="M6 1h15v14h-5" /><path d="M6 1h15v4H6z" fill="#222" />
              </svg>
            </WinButton>
            <WinButton>X</WinButton>
          </WinButtons>
        </MenuRight>
      </MenuBar>

      <TabBar>
        <HomeCell>
          <Ico name="home" size={24} />
          <TabCaret />
        </HomeCell>
        <DocTab>
          <Ico name="tabpart" size={26} />
          Деталь БЕЗ ИМЕНИ1
          <TabClose>×</TabClose>
        </DocTab>
      </TabBar>
      <Band />

      <Ribbon>
        <ModeColumn>
          <ModeItem $active>
            <svg width="28" height="28" viewBox="0 0 28 28"><path d="M2 9l7-7h17v24H2z" fill="#fff" /><path d="M5 11h12v12H5z" fill="#333" /></svg>
            <span>Твердотельное<br />моделирование</span>
          </ModeItem>
          <ModeItem>
            <svg width="28" height="28" viewBox="0 0 28 28"><path d="M14 1l13 12-13 14L1 13z" fill="#222" /><path d="M14 1v26M7 6l14 14M21 6L7 20" stroke="#f2f2f2" strokeWidth="1.5" /></svg>
            <span>Каркас и<br />поверхности</span>
          </ModeItem>
          <ModeItem>
            <Ico name="lsketch" />
            <span>Инструменты<br />эскиза</span>
          </ModeItem>
          <ModeFooter>≫</ModeFooter>
        </ModeColumn>

        <Group $w={124}>
          <IconGrid cols="40px 40px 40px" pad={3} names={["newdoc", "print", "undo", "open", "preview", "redo", "save", "saveas", ""]} />
          <Footer label="Системная" />
        </Group>
        <Group $w={189}>
          <GroupBody $cols="1fr" $pad={9}>
            <Tool icon="autoline" label="Автолиния" />
            <Tool icon="circle" label="Окружность" />
            <Tool icon="rect" label="Прямоугольник" />
          </GroupBody>
          <Footer label="Эскиз" arrow />
        </Group>
        <Group $w={751}>
          <GroupBody $cols="188px 188px 187px 1fr" $pad={9}>
            <Tool icon="extrude" label={"Элемент\nвыдавливания"} />
            <Tool icon="cut" label={"Вырезать\nвыдавливанием"} />
            <Tool icon="fillet" label="Скругление" />
            <Tool icon="thick" label={"Придать\nтолщину"} />
            <Tool icon="hole" label={"Отверстие\nпростое"} />
            <Tool icon="fullfillet" label={"Полное\nскругление"} />
            <Tool icon="rib" label={"Ребро\nжесткости"} />
            <Tool icon="section" label="Сечение" />
            <Tool icon="draft" label="Уклон" />
            <Tool icon="addpart" label={"Добавить\nдеталь-загото..."} />
            <Tool icon="shell" label="Оболочка" />
            <Tool icon="bool" label={"Булева\nоперация"} />
          </GroupBody>
          <Footer label="Элементы тела" arrow />
        </Group>
        <Group $w={190}>
          <GroupBody $cols="1fr" $pad={10}>
            <Tool icon="point" label={"Точка по\nкоординатам"} />
            <Tool icon="contour" label="Контур" />
            <Tool icon="spiral" label={"Спираль\nцилиндрическ..."} />
          </GroupBody>
          <Footer label="Элементы каркаса" arrow left />
        </Group>
        <Group $w={190}>
          <GroupBody $cols="1fr" $pad={8}>
            <Tool icon="grid" label={"Массив по\nсетке"} />
            <Tool icon="copy" label={"Копировать\nобъекты"} />
            <Tool icon="collection" label={"Коллекция\nгеометрии"} />
          </GroupBody>
          <Footer label="Массив, копирование" left />
        </Group>
        <Group $w={81}>
          <IconGrid cols="41px 41px" pad={0} names={["a1", "a3", "a5", "a2", "a4", ""]} />
          <Footer label="Вспо..." left />
        </Group>
        <Group $w={83}>
          <IconGrid cols="41px 41px" pad={1} names={["r1", "r3", "r5", "r2", "r4", "r6"]} />
          <Footer label="Ра..." arrow left />
        </Group>
        <Group $w={124}>
          <IconGrid cols="41px 41px 41px" pad={0} names={["o1", "o4", "o7", "o2", "o5", "o8", "o3", "o6", "t"]} />
          <Footer label="Обозна..." arrow left />
        </Group>
        <Group $w={377}>
          <GroupBody $cols="186px 1fr" $pad={10}>
            <Tool icon="info" label={"Информация\nоб объекте"} />
            <Tool icon="mch" label="МЦХ модели" />
            <Tool icon="curv" label={"График\nкривизны"} />
            <Tool icon="dist" label={"Расстояние и\nугол"} />
            <Tool icon="collide" label={"Проверка\nколлизий"} />
            <Tool icon="cont" label={"Проверка\nнепрерывности"} />
          </GroupBody>
          <Footer label="Диагностика" />
        </Group>
        <Group $w={41}>
          <IconGrid cols="1fr" names={["c1", "c2", ""]} />
          <Footer label="Ч." left />
        </Group>
      </Ribbon>

      <Workspace>
        <Rail>
          <RailItem $active><Ico name="treeRail" size={26} light /></RailItem>
          <RailItem><Ico name="checks" size={26} /></RailItem>
          <RailItem><Ico name="fx" size={28} /></RailItem>
          <RailItem $h={38}><Ico name="lines" size={26} /></RailItem>
        </Rail>
        <TreePanel>
          <PanelHead>
            Дерево
            <Ico name="gear" size={20} />
          </PanelHead>
          <TreeTools>
            <TreeTool $active><Ico name="treeNum" size={26} light /></TreeTool>
            <TreeTool><Ico name="treeGroup" size={26} /></TreeTool>
            <TreeTool><Ico name="treeFaces" size={28} /></TreeTool>
            <TreeTool><Ico name="treeSel" size={26} /></TreeTool>
          </TreeTools>
          <TreeSearch>
            <FilterCell><Ico name="filter" size={27} /></FilterCell>
            <Ico name="lens" size={20} />
            &nbsp;&nbsp;Поиск (Ctrl+/)
          </TreeSearch>
          <Rows>
            <Row>
              <Gutter />
              <RowMain $selected $indent={18}>
                <Expander $open />
                <Ico name="partico" size={28} />
                <RowText>Деталь (Тел-1)</RowText>
              </RowMain>
            </Row>
            <Row>
              <Gutter />
              <RowMain $indent={35}>
                <Expander />
                <Ico name="origin" size={27} />
                <Dot />
                <RowText $muted>Начало координат</RowText>
              </RowMain>
            </Row>
            <Row>
              <Gutter />
              <RowMain $indent={52}>
                <Ico name="folder" size={22} />
                <FolderArrow viewBox="0 0 10 14" fill="none" stroke="#222" strokeWidth="2"><path d="M1 2h5v9M3 8l3 4 3-4" /></FolderArrow>
                <RowText>Шестерня цилиндрическая с внешним зацеплением</RowText>
              </RowMain>
            </Row>
            {treeRows.map((r) => (
              <Row key={r.text}>
                <Gutter>
                  <GutterSlot>{r.eye && <Ico name="eyeStruck" size={26} />}</GutterSlot>
                  <GutterSlot><Ico name="member" size={22} /></GutterSlot>
                </Gutter>
                <RowMain $indent={52}>
                  <Ico name={r.icon} size={28} />
                  {r.kind === "sketch" && <Minus>(−)</Minus>}
                  <RowText $muted={r.kind === "sketch"}>{r.text}</RowText>
                </RowMain>
              </Row>
            ))}
          </Rows>
          <Selection />
          <TreeFill />
          <SubTabs>
            <TreeTool $active>
              <svg width="26" height="26" viewBox="0 0 28 28" fill="none" stroke="#fff" strokeWidth="1.6"><path d="M6 4v19h6M6 13h6" /><rect x="4" y="1" width="4" height="4" /><rect x="13" y="8" width="7" height="5" /><rect x="13" y="20" width="7" height="5" /></svg>
            </TreeTool>
            <TreeTool><Ico name="checks" size={26} /></TreeTool>
          </SubTabs>
          <SubFill />
        </TreePanel>
        <Viewport>
          <ViewTools>
            <ViewGrip />
            <ViewBtn $w={45}><Ico name="lsketch" size={26} /></ViewBtn>
            <ViewBtn $w={46}><Ico name="zoom" size={26} /></ViewBtn>
            <ViewBtn $w={28}><Tri $big /></ViewBtn>
            <ViewBtn $w={46}><Ico name="normal" size={28} /></ViewBtn>
            <ViewBtn $w={39}><Ico name="axes" size={26} /></ViewBtn>
            <ViewBtn $w={34}><Tri $big /></ViewBtn>
            <ViewBtn $active $gap={3} $w={41}><Ico name="cube" size={28} /></ViewBtn>
            <ViewBtn $w={47}><Ico name="wire" size={28} /></ViewBtn>
            <ViewBtn $w={30}><Tri $big /></ViewBtn>
            <ViewBtn $w={42}><Ico name="eyeoff" size={28} /></ViewBtn>
            <ViewBtn $w={33}><Tri $big /></ViewBtn>
            <ViewBtn $w={45}><Ico name="eyebox" size={26} /></ViewBtn>
            <ViewBtn $w={32}><Tri $big /></ViewBtn>
            <ViewBtn $active $gap={3} $w={41}><Ico name="nodes" size={28} /></ViewBtn>
            <ViewBtn $w={44}><Ico name="frame" size={28} /></ViewBtn>
            <ViewBtn $active $w={41}><Ico name="solids" size={28} /></ViewBtn>
            <ViewBtn $w={44}><Ico name="chain" size={28} /></ViewBtn>
            <ViewBtn $active $gap={3} $w={73}><Ico name="funnel" size={28} /><Tri $big $light /></ViewBtn>
            <ViewBtn $gap={2} $w={44}><Ico name="crane" size={28} /></ViewBtn>
            <ViewBtn $w={43}><Ico name="pipette" size={28} /></ViewBtn>
          </ViewTools>
          <GearDrawing />
          <AxisTriad />
        </Viewport>
      </Workspace>

      <Taskbar>
        <StartBtn>
          <svg width="26" height="26" viewBox="0 0 26 26" fill="#fff">
            <path d="M0 4l11-2v11H0zM12.500 1.800L26 0v13H12.500zM0 14h11v10.500L0 23zM12.500 14H26v12l-13.500-2z" />
          </svg>
        </StartBtn>
        <SearchBox>
          <svg width="27" height="28" viewBox="0 0 27 28" fill="none" stroke="#222" strokeWidth="2">
            <circle cx="17" cy="10" r="8" /><path d="M11 16L2 27" />
          </svg>
          Поиск
          <Deer viewBox="0 0 115 62">
            <ellipse cx="60" cy="66" rx="54" ry="14" fill="#8ab04a" />
            <path d="M30 4l6 9M44 2l-6 11M26 8l6 4M48 6l-6 5" stroke="#bbb" strokeWidth="1.6" fill="none" />
            <path d="M30 14h14l-3 10 4 8h22c7 0 9 5 9 12l2 14h-3l-3-12-4 2 1 12h-3l-3-14H42l-1 14h-3l-1-14-2 14h-3l1-22-1-14-3-8z" fill="#c07a30" />
            <path d="M34 16h6l-1 8h-4z" fill="#7a3f14" />
          </Deer>
        </SearchBox>
        <TaskIcons>
          <TaskItem>
            <svg width="24" height="34" viewBox="0 0 24 34" fill="none" stroke="#eee" strokeWidth="1.6">
              <path d="M1 1v4h13V1M1 10h13v13H1zM1 33v-4h13v4M21 1v10M21 20v13" /><path d="M19 14h4v4h-4z" fill="#eee" stroke="none" />
            </svg>
          </TaskItem>
          <TaskItem>
            <svg width="38" height="38" viewBox="0 0 38 38">
              <circle cx="19" cy="19" r="18" fill="#1b7ec6" />
              <path d="M1 19C2 8 10 1 19 1c11 0 18 8 18 18 0 5-4 7-8 7-5 0-8-2-8-6 0-2 1-4 3-5-2-2-5-3-8-3-8 0-14 7-15 7z" fill="#37c1a2" />
              <path d="M22 15c5 0 13-1 15 4 0-9-6-18-18-18C13 1 8 4 5 8c5-3 13-3 17 7z" fill="#5ad068" />
              <path d="M15 22c1 7 9 9 13 8-3 4-7 7-12 6-5-2-9-9-6-16 1 0 4 0 5 2z" fill="#0a4e9a" />
            </svg>
          </TaskItem>
          <TaskItem>
            <svg width="36" height="30" viewBox="0 0 36 30">
              <path d="M1 2h13l3 4h18v22H1z" fill="#f7c84a" />
              <path d="M1 2h13l3 4H1z" fill="#e3a020" />
              <path d="M10 15h16l2 3v9h-6v-6h-8v6H8v-9z" fill="#3e8ed0" />
            </svg>
          </TaskItem>
          <TaskItem>
            <svg width="38" height="38" viewBox="0 0 38 38">
              <path d="M9 10V2h20v8" fill="none" stroke="#22b7d8" strokeWidth="2" />
              <rect x="1" y="8" width="36" height="29" rx="3" fill="#f3f3f3" />
              <rect x="13" y="14" width="6" height="6" fill="#e8502c" />
              <rect x="20" y="14" width="6" height="6" fill="#7cb82a" />
              <rect x="13" y="21" width="6" height="6" fill="#1e9ae0" />
              <rect x="20" y="21" width="6" height="6" fill="#f7b500" />
            </svg>
          </TaskItem>
          <TaskItem>
            <svg width="38" height="36" viewBox="0 0 38 36">
              <path d="M19 0l19 14H0z" fill="#0b5aa8" />
              <path d="M0 14h38v22H0z" fill="#26a7ea" />
              <path d="M7 10h24v6L19 24 7 16z" fill="#f2f2f2" />
              <path d="M0 14l19 13 19-13v22H0z" fill="#3db8f3" />
            </svg>
          </TaskItem>
          <TaskItem $open>
            <svg width="38" height="38" viewBox="0 0 38 38">
              <circle cx="19" cy="19" r="19" fill="#fff" />
              <path d="M9 9l10 12 10-12M19 20v13" fill="none" stroke="#f0402c" strokeWidth="5" />
            </svg>
          </TaskItem>
          <TaskItem>
            <svg width="38" height="38" viewBox="0 0 38 38">
              <circle cx="19" cy="19" r="19" fill="#f33c20" />
              <text x="19" y="30" fontSize="30" fontWeight="700" textAnchor="middle" fill="#fff" fontFamily="Liberation Sans">Я</text>
            </svg>
          </TaskItem>
          <TaskItem $active $open><KompasMark size={36} /></TaskItem>
          <TaskItem $open>
            <svg width="30" height="40" viewBox="0 0 30 40">
              <defs>
                <linearGradient id="dropFill" x1="0" y1="0" x2="0" y2="1">
                  <stop offset="0" stopColor="#f7c13a" />
                  <stop offset="0.3" stopColor="#e0569c" />
                  <stop offset="0.6" stopColor="#8a64d0" />
                  <stop offset="1" stopColor="#16a6e8" />
                </linearGradient>
              </defs>
              <path d="M17 0c1 8 12 14 12 26a14 14 0 0 1-28 0C1 14 14 10 17 0z" fill="url(#dropFill)" />
            </svg>
          </TaskItem>
        </TaskIcons>
        <Tray>
          <TraySlot>
            <svg width="20" height="12" viewBox="0 0 20 12" fill="none" stroke="#eee" strokeWidth="1.6"><path d="M1 11l9-9 9 9" /></svg>
          </TraySlot>
          <TraySlot>
            <svg width="20" height="24" viewBox="0 0 20 24" fill="none" stroke="#eee" strokeWidth="1.4"><path d="M2 8h10v9H2zM12 12l6-3v7l-6-3M3 3c3-2 7-2 10 0M3 22c3 2 7 2 10 0" /></svg>
          </TraySlot>
          <TraySlot>
            <svg width="26" height="18" viewBox="0 0 26 18" fill="none" stroke="#eee" strokeWidth="1.5"><path d="M2 0v4h5V0M4 4v4M8 6h16v10H8z" /><path d="M10 8h12v6H10z" fill="#eee" /></svg>
          </TraySlot>
          <TraySlot>
            <svg width="22" height="22" viewBox="0 0 22 22" fill="none" stroke="#ccc" strokeWidth="1.3"><path d="M1 21C3 10 10 3 21 1M6 21c1-7 6-12 13-14M11 21c1-4 3-6 7-8" /><circle cx="17" cy="19" r="2" fill="#eee" stroke="none" /></svg>
          </TraySlot>
          <TraySlot>
            <svg width="26" height="22" viewBox="0 0 26 22" fill="none" stroke="#eee" strokeWidth="1.4"><path d="M1 8h4l6-5v17l-6-5H1zM15 7c2 2 2 6 0 8M18 4c4 4 4 10 0 14" /></svg>
          </TraySlot>
          <Lang>РУС</Lang>
          <Clock><span>19:26</span><span>17.11.2024</span></Clock>
          <Notify>
            <svg width="26" height="26" viewBox="0 0 26 26" fill="none" stroke="#eee" strokeWidth="1.6"><path d="M1 1h24v19h-9l-3 4-3-4H1z" /></svg>
          </Notify>
          <Edge />
        </Tray>
      </Taskbar>
    </Page>
  );
}
